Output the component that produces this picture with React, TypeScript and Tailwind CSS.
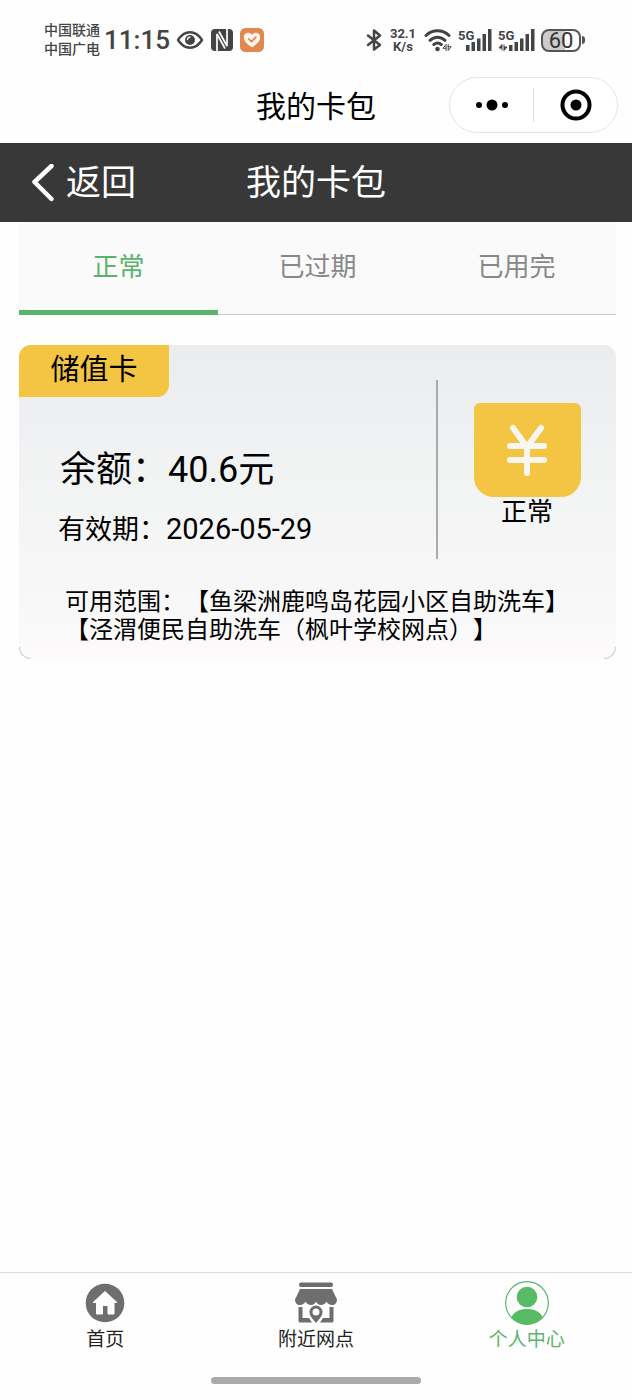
import { useState } from "react";

const tabs = ["正常", "已过期", "已用完"];

function EyeIcon() {
    return <svg width="28" height="20" viewBox="0 0 28 20" fill="none">
        <path d="M2 10C5.500 4.500 9.500 2.200 14 2.200S22.500 4.500 26 10C22.500 15.500 18.500 17.800 14 17.800S5.500 15.500 2 10Z" stroke="#444" strokeWidth="2.400" strokeLinejoin="round"/>
        <circle cx="14" cy="10" r="5" fill="#444"/>
        <path d="M11.500 9.500a2.500 2.500 0 0 1 2.500-2.300" stroke="#fff" strokeWidth="1.300" strokeLinecap="round"/>
    </svg>
}

function NfcIcon() {
    return <svg width="22" height="24" viewBox="0 0 22 24">
        <rect y="1" width="22" height="22" rx="4" fill="#444"/>
        <path d="M6 24V6L14 20.500M8 3.500 16 18V0" fill="none" stroke="#fff" strokeWidth="1.700"/>
    </svg>
}

function HealthIcon() {
    return <svg width="24" height="24" viewBox="0 0 24 24">
        <rect width="24" height="24" rx="5.500" fill="#e0884f"/>
        <path d="M12 19.500C7.500 16.500 3.800 13.500 3.800 9.300 3.800 6.500 5.800 4.800 8.100 4.800c1.600 0 3 .8 3.900 2.200.9-1.400 2.300-2.200 3.900-2.200 2.300 0 4.300 1.700 4.300 4.500 0 4.200-3.700 7.200-8.200 10.200Z" fill="#fff4ea"/>
        <path d="m8.800 11 2.600 2.600 4.400-4.400" fill="none" stroke="#dd8550" strokeWidth="1.700" strokeLinecap="round" strokeLinejoin="round"/>
    </svg>
}

function BluetoothIcon() {
    return <svg width="16" height="24" viewBox="0 0 16 24" fill="none" stroke="#444" strokeWidth="2.500" strokeLinejoin="round" strokeLinecap="round">
        <path d="M2 7.500 14 17 8 21.500V2.500L14 7.500 2 17"/>
    </svg>
}

function WifiIcon() {
    return <svg width="28" height="24" viewBox="0 0 28 24" fill="none" stroke="#444" strokeWidth="3" strokeLinecap="round">
        <path d="M2 7.500C8.500 1.300 18.500 1.300 25 7.500"/>
        <path d="M6 12.300C10.500 8.100 16.500 8.100 21 12.300"/>
        <path d="M9.800 16.500c2.300-1.900 5.200-1.900 7.500 0"/>
        <circle cx="13.500" cy="21" r="2.300" fill="#444" stroke="none"/>
        <path d="M22 22.500v-6l-3 3.800h3M24.200 16.500v6l3-3.800h-3" strokeWidth="1" strokeLinejoin="round"/>
    </svg>
}

function SignalIcon({ data }: { data?: boolean }) {
    return <svg className="overflow-visible" width={data ? 37 : 34} height="24" viewBox={data ? "0 0 37 24" : "0 0 34 24"} fill="#444">
        <text x="0" y="12" fontFamily="Roboto, sans-serif" fontSize="13" fontWeight="700">5G</text>
        {data
            ? <>
                <path d="M4 22.500v-6L1 20h3M6 16.500v6l3-3.500H6" stroke="#444" strokeWidth="1"/>
                <path d="M11 17h3.500v6H11zM16.500 14H20v9h-3.500zM22 10.500h3.500V23H22zM27.500 6H31v17h-3.500zM33 1h3.500v22H33z"/>
            </>
            : <path d="M8 17h3.500v6H8zM13.500 14H17v9h-3.500zM19 10.500h3.500V23H19zM24.500 6H28v17h-3.500zM30 1h3.500v22H30z"/>}
    </svg>
}

function Battery() {
    return <div className="flex items-center gap-px">
        <div className="w-10 h-[23px] rounded-lg border-2 border-[#555] bg-linear-to-r from-[#ccc] from-60% to-white to-60% text-center text-[22px] leading-5 text-[#333]">60</div>
        <div className="w-[3px] h-2 rounded-r bg-[#555]"></div>
    </div>
}

function StatusBar() {
    return <div className="flex items-center justify-between h-[77px] pt-[3px] pl-11 pr-[47px] text-[#444]">
        <div className="flex items-center gap-1.5">
            <div className="flex items-center gap-1">
                <div className="text-sm leading-[19px] font-medium">
                    <div>中国联通</div>
                    <div>中国广电</div>
                </div>
                <div className="w-[66px] text-center text-[26px] leading-8 font-medium">11:15</div>
            </div>
            <div className="flex items-center gap-[7px]">
                <EyeIcon/>
                <NfcIcon/>
                <HealthIcon/>
            </div>
        </div>
        <div className="flex items-center gap-[6px]">
            <BluetoothIcon/>
            <div className="w-[30px] text-center text-[13px] leading-[13px] font-bold">
                <div>32.1</div>
                <div>K/s</div>
            </div>
            <WifiIcon/>
            <SignalIcon/>
            <SignalIcon data/>
            <Battery/>
        </div>
    </div>
}

function AppTitle() {
    return <div className="grid grid-cols-[1fr_auto_1fr] items-center h-[66px] pb-[10px] pr-[14px]">
        <h1 className="col-start-2 pt-1 text-[30px] leading-10 pl-[14px]">我的卡包</h1>
        <div className="justify-self-end flex items-center w-[169px] h-14 rounded-full border border-[#e4e4e4] bg-white">
            <button aria-label="更多" className="flex-1 flex justify-center">
                <svg width="36" height="12" viewBox="0 0 36 12">
                    <circle cx="5" cy="6" r="3"/>
                    <circle cx="18" cy="6" r="5.500"/>
                    <circle cx="31" cy="6" r="3"/>
                </svg>
            </button>
            <div className="w-px h-[34px] bg-[#ddd]"></div>
            <button aria-label="关闭" className="flex-1 flex justify-center">
                <svg width="32" height="32" viewBox="0 0 32 32">
                    <circle cx="16" cy="16" r="13.500" fill="none" stroke="#000" strokeWidth="4"/>
                    <circle cx="16" cy="16" r="5.500"/>
                </svg>
            </button>
        </div>
    </div>
}

function PageHeader() {
    return <header className="grid grid-cols-[1fr_auto_1fr] items-center h-[79px] px-[30px] pt-0.5 bg-[#383838] text-white">
        <button className="justify-self-start flex items-center gap-3 text-[35px] leading-10">
            <svg width="24" height="40" viewBox="0 0 24 40" fill="none" stroke="#fff" strokeWidth="4.500" strokeLinecap="round" strokeLinejoin="round">
                <path d="M21.500 2 4.500 18 21.500 35"/>
            </svg>
            返回
        </button>
        <h2 className="text-[35px] leading-10">我的卡包</h2>
    </header>
}

function Tabs() {
    const [active, setActive] = useState(0);
    return <div className="grid grid-cols-3 ml-[19px] mr-4 bg-[#fafafa] border-b border-[#ccc]">
        {tabs.map((tab, i) => (
            <button
                key={tab}
                onClick={() => setActive(i)}
                className={`-mb-px h-[93px] pt-0.5 border-b-[5px] text-[26px] leading-10 ${i === active ? "border-[#5bb46c] text-[#5bb46c]" : "border-transparent text-[#888]"}`}
            >
                {tab}
            </button>
        ))}
    </div>
}

function Card() {
    return <section className="relative ml-[19px] mr-4 mt-[30px] pb-[15px] rounded-xl bg-linear-to-b from-[#ebecee] via-[#f3f4f4] to-[#fcfafb]">
        <div className="flex items-start">
            <div className="flex-1">
                <div className="w-[150px] h-[52px] rounded-tl-xl rounded-br-xl bg-[#f4c443] text-center text-[29px] leading-[50px]">储值卡</div>
                <div className="mt-12 pl-[41px] text-[36px] leading-[50px]">余额：40.6元</div>
                <div className="mt-[14px] pl-[39px] text-[27px] leading-10">有效期：<span className="text-[29px]">2026-05-29</span></div>
            </div>
            <div className="mt-[35px] w-45 h-[179px] flex flex-col items-center border-l-2 border-[#aaa]">
                <div className="mt-[23px] w-[107px] h-[94px] flex items-center justify-center rounded-t-md rounded-b-[20px] bg-[#f4c443]">
                    <svg width="42" height="52" viewBox="0 0 42 52" fill="none" stroke="#f7f6f2" strokeWidth="6" strokeLinecap="round" strokeLinejoin="round">
                        <path d="M7 4 21 23 35 4M21 23V49M4 22H38M4 36H38"/>
                    </svg>
                </div>
                <div className="text-[26px] leading-[30px]">正常</div>
            </div>
        </div>
        <p className="mt-[29px] pl-[46px] text-2xl leading-7 [text-spacing-trim:space-all]">
            可用范围：【鱼梁洲鹿鸣岛花园小区自助洗车】<br/>【泾渭便民自助洗车（枫叶学校网点）】
        </p>
        <span className="absolute bottom-0 left-0 size-3 rounded-bl-xl border-b border-l border-[#ccc]"></span>
        <span className="absolute bottom-0 right-0 size-3 rounded-br-xl border-b border-r border-[#ccc]"></span>
    </section>
}

function HomeIcon() {
    return <svg width="40" height="44" viewBox="0 0 40 44">
        <circle cx="20" cy="22" r="19.300" fill="#6e6e6e"/>
        <path d="M20 10.500 32 21.500H29V33H23V24.500H17.500V33H11.500V21.500H8Z" fill="#fff" stroke="#fff" strokeWidth="1" strokeLinejoin="round"/>
    </svg>
}

function StoreIcon() {
    return <svg width="44" height="44" viewBox="0 0 44 44" fill="#6e6e6e">
        <rect x="5" y="1.500" width="34" height="4.500" rx="2"/>
        <path d="M6 8H38L43 18.500C43 22 41 24 38 24 35.500 24 33.500 22.500 32.500 20.500 31.500 22.500 29.500 24 27 24 24.500 24 22.800 22.500 22 20.500 21.200 22.500 19.500 24 17 24 14.500 24 12.500 22.500 11.500 20.500 10.500 22.500 8.500 24 6 24 3 24 1 22 1 18.500Z"/>
        <path d="M4.500 26H8.500V37H15L18 41.500H6Q4.500 41.500 4.500 40ZM39.500 26H35.500V37H29L26 41.500H38Q39.500 41.500 39.500 40Z"/>
        <path fillRule="evenodd" d="M22 42C18.500 38 15.500 34.500 15.500 31A6.500 6.500 0 0 1 28.500 31C28.500 34.500 25.500 38 22 42ZM22 34.500A3.500 3.500 0 1 0 22 27.500 3.500 3.500 0 0 0 22 34.500Z"/>
    </svg>
}

function UserIcon() {
    return <svg width="44" height="44" viewBox="0 0 44 44">
        <circle cx="22" cy="22" r="21.300" fill="none" stroke="#5bb46c" strokeWidth="1.200"/>
        <circle cx="22" cy="16" r="10.300" fill="#56bb63"/>
        <path d="M6.500 36C9 30.500 15 28 22 28S35 30.500 37.500 36C34 40.500 28.500 43.500 22 43.500S10 40.500 6.500 36Z" fill="#56bb63"/>
    </svg>
}

function BottomNav() {
    return <nav className="mt-auto border-t border-[#ddd]">
        <div className="grid grid-cols-3 pt-2 text-[19px] leading-[30px] text-[#222]">
            <a href="#home" className="flex flex-col items-center">
                <HomeIcon/>
                首页
            </a>
            <a href="#nearby" className="flex flex-col items-center">
                <StoreIcon/>
                附近网点
            </a>
            <a href="#me" className="flex flex-col items-center text-[#5bb46c]">
                <UserIcon/>
                个人中心
            </a>
        </div>
        <div className="mx-auto mt-[22px] mb-4 w-1/3 h-[7px] rounded-full bg-[#aaa]"></div>
    </nav>
}

export default function App() {
    return <div lang="zh-CN" className="min-h-screen flex flex-col bg-[#fefefe] text-black font-[Roboto,'Noto_Sans_CJK_SC',sans-serif]">
        <StatusBar/>
        <AppTitle/>
        <PageHeader/>
        <Tabs/>
        <Card/>
        <BottomNav/>
    </div>
}
